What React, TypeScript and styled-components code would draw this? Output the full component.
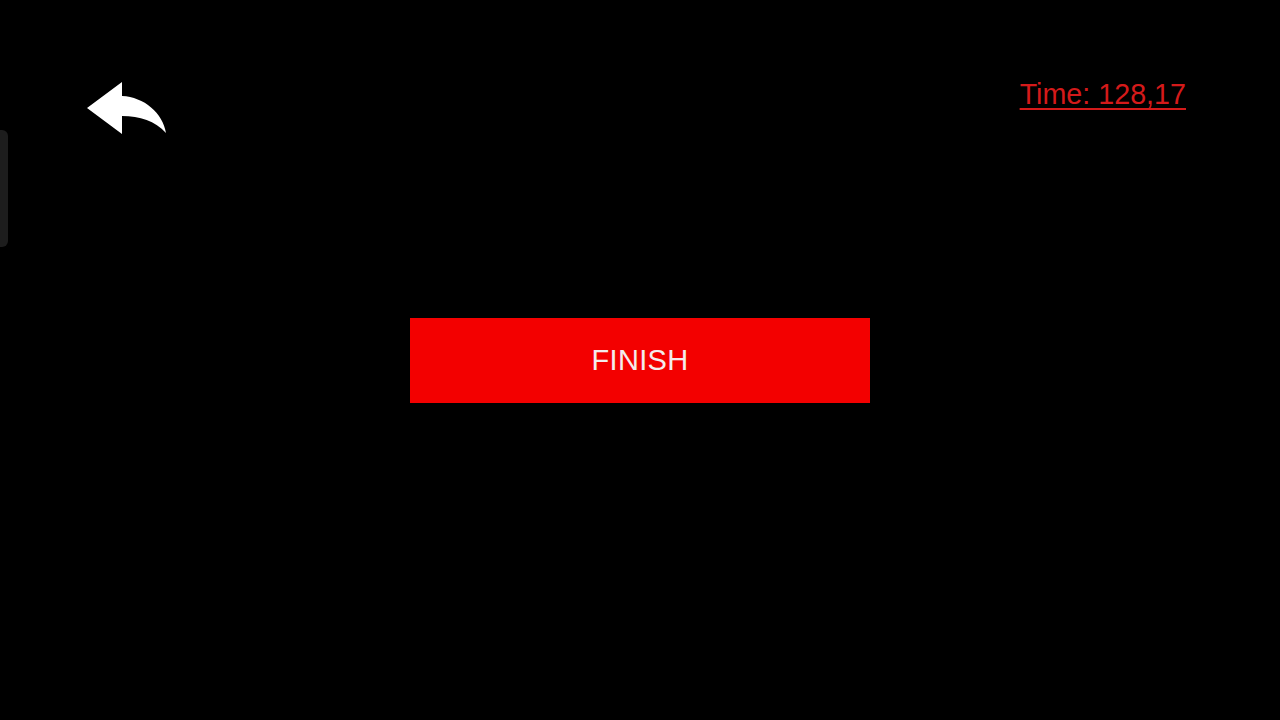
import React from "react";
import styled, { createGlobalStyle } from "styled-components";

const GlobalStyle = createGlobalStyle`
  html, body {
    margin: 0;
    padding: 0;
    background: #000000;
    font-family: "Liberation Sans", Arial, sans-serif;
  }
`;

const Screen = styled.div`
  position: relative;
  width: 1280px;
  height: 720px;
  background: #000000;
  display: flex;
  flex-direction: column;
  overflow: hidden;
`;

const EdgeHandle = styled.div`
  position: absolute;
  left: 0;
  top: 130px;
  width: 8px;
  height: 117px;
  background: #1d1d1d;
  border-radius: 0 6px 6px 0;
`;

const Header = styled.header`
  display: flex;
  justify-content: space-between;
  align-items: flex-start;
  padding: 78px 94px 0 86px;
`;

const BackButton = styled.button`
  margin-top: 3px;
  padding: 0;
  border: none;
  background: transparent;
  width: 81px;
  height: 54px;
  display: block;
  cursor: pointer;
`;

const TimeLabel = styled.a`
  color: #d41a1a;
  font-size: 28.7px;
  line-height: 32px;
  text-decoration: underline;
  text-decoration-thickness: 2px;
  text-underline-offset: 4px;
`;

const Main = styled.main`
  display: flex;
  justify-content: center;
  padding-top: 183px;
`;

const FinishButton = styled.button`
  width: 460px;
  height: 85px;
  border: none;
  background: #f30000;
  color: #f4ecec;
  font-family: "Liberation Sans", Arial, sans-serif;
  font-size: 29px;
  letter-spacing: 0.3px;
  padding: 0;
  cursor: pointer;
`;

const ReplyIcon = () => (
  <svg width="81" height="54" viewBox="0 0 81 54" fill="#ffffff">
    <path d="M1 27 L36 1 L36 15 C58 16 77 32 80 52 C69 40 54 35 36 35 L36 53 Z" />
  </svg>
);

export default function App() {
  return (
    <>
      <GlobalStyle />
      <Screen>
        <EdgeHandle />
        <Header>
          <BackButton aria-label="Back">
            <ReplyIcon />
          </BackButton>
          <TimeLabel>Time: 128,17</TimeLabel>
        </Header>
        <Main>
          <FinishButton>FINISH</FinishButton>
        </Main>
      </Screen>
    </>
  );
}
